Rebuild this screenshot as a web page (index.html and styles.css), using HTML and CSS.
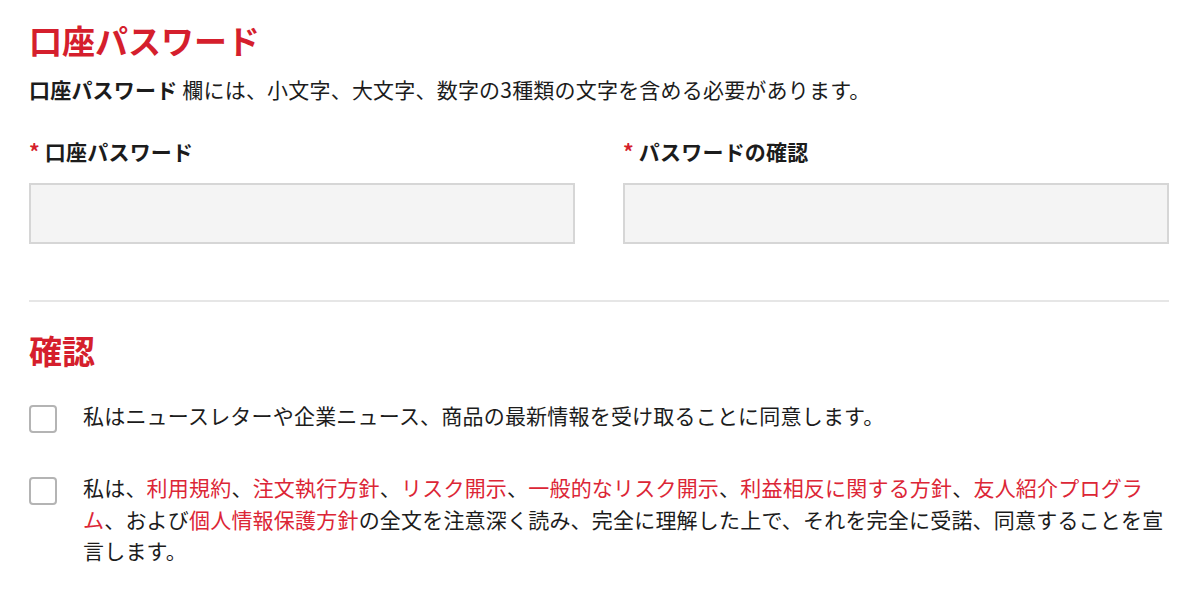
FILE: index.html
```html
<!DOCTYPE html>
<html lang="ja">
<head>
<meta charset="utf-8">
<title>口座パスワード</title>
<link rel="stylesheet" href="styles.css">
</head>
<body>
<main class="page">
  <section class="section">
    <h1 class="title">口座パスワード</h1>
    <p class="note"><strong>口座パスワード</strong> 欄には、小文字、大文字、数字の3種類の文字を含める必要があります。</p>
    <div class="fields">
      <div class="field">
        <label class="label"><span class="req">*</span> 口座パスワード</label>
        <input class="input" type="password">
      </div>
      <div class="field">
        <label class="label"><span class="req">*</span> パスワードの確認</label>
        <input class="input" type="password">
      </div>
    </div>
  </section>
  <hr class="divider">
  <section class="section">
    <h2 class="title title-confirm">確認</h2>
    <div class="checks">
      <label class="check">
        <span class="box"></span>
        <span class="check-text">私はニュースレターや企業ニュース、商品の最新情報を受け取ることに同意します。</span>
      </label>
      <label class="check">
        <span class="box"></span>
        <span class="check-text">私は、<a class="link">利用規約</a>、<a class="link">注文執行方針</a>、<a class="link">リスク開示</a>、<a class="link">一般的なリスク開示</a>、<a class="link">利益相反に関する方針</a>、<a class="link">友人紹介プログラム</a>、および<a class="link">個人情報保護方針</a>の全文を注意深く読み、完全に理解した上で、それを完全に受諾、同意することを宣言します。</span>
      </label>
    </div>
  </section>
</main>
</body>
</html>
```

FILE: styles.css
```css
* {
  box-sizing: border-box;
}

html, body {
  margin: 0;
  padding: 0;
  background: #ffffff;
}

body {
  font-family: "Noto Sans CJK JP", "Noto Sans", sans-serif;
  color: #1c1c1c;
  font-size: 21px;
  letter-spacing: 0.2px;
}

.page {
  width: 1140px;
  margin-left: 29px;
  padding-top: 20px;
}

.title {
  margin: 0;
  font-size: 33px;
  line-height: 40px;
  font-weight: 700;
  color: #d51f2d;
  letter-spacing: 0;
}

.note {
  margin: 14px 0 0;
  line-height: 31.5px;
}

.note strong {
  font-weight: 700;
}

.fields {
  display: grid;
  grid-template-columns: 1fr 1fr;
  column-gap: 48px;
  margin-top: 30px;
}

.field {
  display: flex;
  flex-direction: column;
}

.label {
  font-weight: 700;
  line-height: 31.5px;
}

.req {
  color: #d51f2d;
}

.input {
  margin-top: 15.5px;
  height: 61px;
  width: 100%;
  background: #f4f4f4;
  border: 2px solid #d6d6d6;
  border-radius: 0;
  outline: none;
}

.divider {
  margin: 56px 0 0;
  border: 0;
  border-top: 2px solid #e6e6e6;
  height: 0;
}

.title-confirm {
  margin-top: 28px;
}

.checks {
  display: flex;
  flex-direction: column;
  gap: 39.5px;
  margin-top: 30px;
}

.check {
  display: flex;
  align-items: flex-start;
  gap: 26px;
}

.box {
  flex: 0 0 28px;
  width: 28px;
  height: 28px;
  margin-top: 5px;
  border: 2px solid #b4b4b4;
  border-radius: 4px;
  background: #ffffff;
}

.check-text {
  flex: 1;
  line-height: 31.5px;
  color: #1c1c1c;
}

.link {
  color: #dc2636;
  text-decoration: none;
}
```
